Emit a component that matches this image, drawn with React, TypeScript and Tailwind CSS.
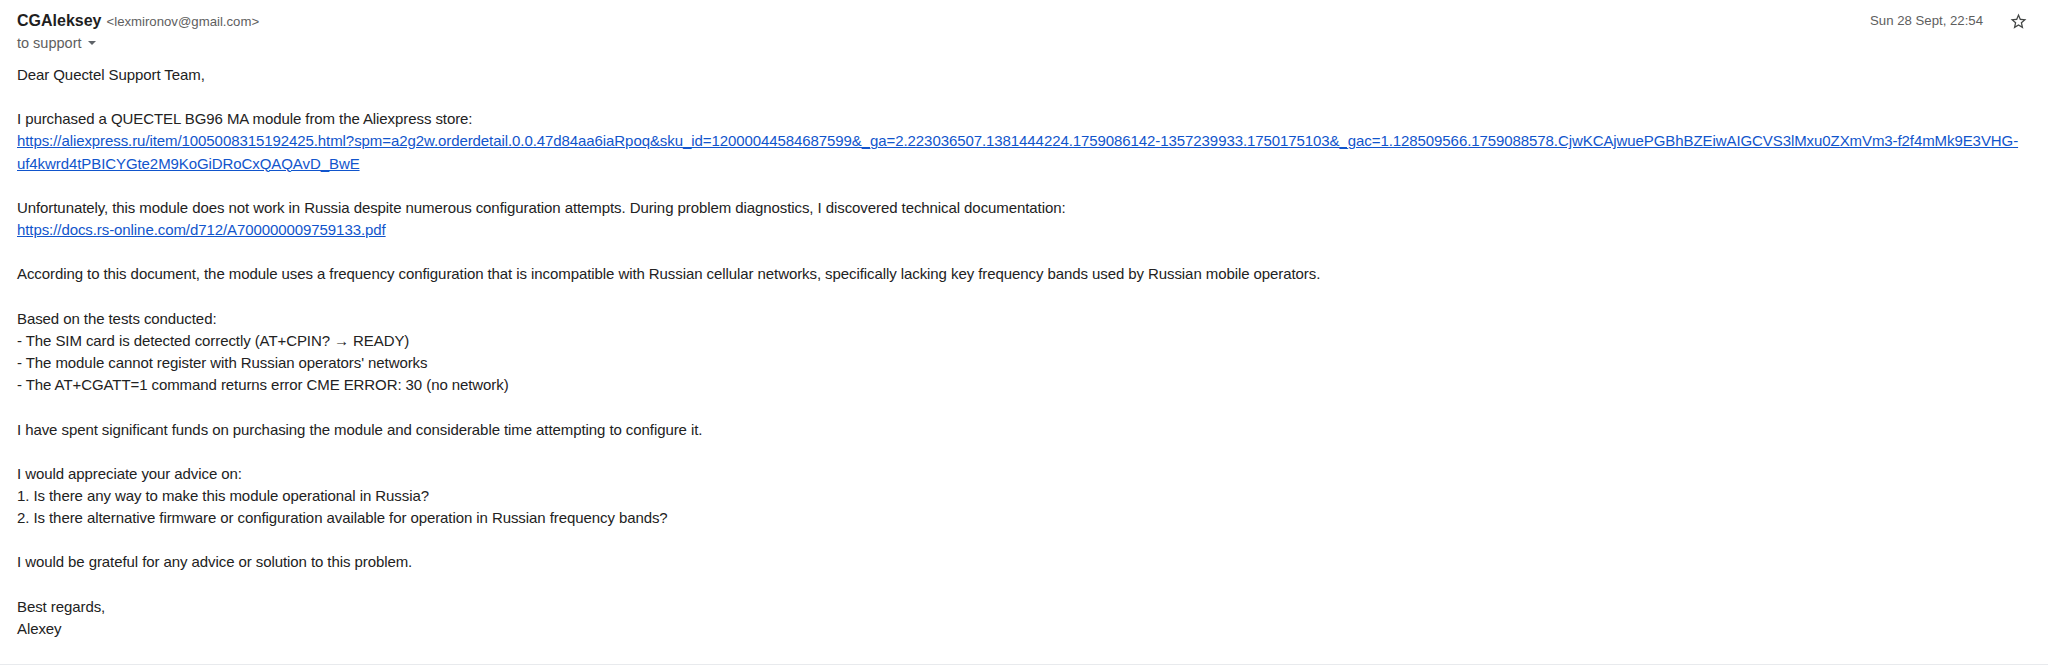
const LINK = 'text-[#1155cc] underline'

function StarIcon() {
  return (
    <svg width="19" height="19" viewBox="0 0 24 24" fill="#444746">
      <path d="M22 9.24l-7.19-.62L12 2 9.19 8.63 2 9.24l5.46 4.73L5.82 21 12 17.27 18.18 21l-1.63-7.03L22 9.24zM12 15.4l-3.76 2.27 1-4.28-3.32-2.88 4.38-.38L12 6.1l1.71 4.04 4.38.38-3.32 2.88 1 4.28L12 15.4z" />
    </svg>
  )
}

function Blank() {
  return <div className="h-[22.16px]" />
}

export default function App() {
  return (
    <div className="w-[2048px] h-[671px] bg-white font-['Liberation_Sans',Arial,sans-serif] text-[#222222]">
      <div className="border-b border-[#e8eaed] h-[665px]">
        {/* header */}
        <div className="flex justify-between pl-[17px] pr-[20px] pt-[11px]">
          <div className="flex flex-col">
            <div className="flex items-baseline leading-[20px]">
              <span className="text-[16px] font-bold text-[#1f1f1f]">CGAleksey</span>
              <span className="ml-[5px] text-[13.2px] text-[#5e5e5e]">&lt;lexmironov@gmail.com&gt;</span>
            </div>
            <div className="flex items-center mt-[2px] leading-[18px] text-[14.5px] text-[#5e5e5e]">
              <span>to support</span>
              <svg className="ml-[6px]" width="8" height="4" viewBox="0 0 8 4">
                <polygon points="0,0 8,0 4,4" fill="#5f6368" />
              </svg>
            </div>
          </div>
          <div className="flex items-start">
            <span className="leading-[20px] text-[13.2px] text-[#5e5e5e]">Sun 28 Sept, 22:54</span>
            <div className="ml-[26px] mt-[1px]">
              <StarIcon />
            </div>
          </div>
        </div>

        {/* body */}
        <div className="pl-[17px] pt-[12px] text-[15px] tracking-[-0.08px] leading-[22.16px]">
          <div>Dear Quectel Support Team,</div>
          <Blank />
          <div>I purchased a QUECTEL BG96 MA module from the Aliexpress store:</div>
          <div>
            <a className={LINK} href="#">
              https://aliexpress.ru/item/1005008315192425.html?spm=a2g2w.orderdetail.0.0.47d84aa6iaRpoq&amp;sku_id=12000044584687599&amp;_ga=2.223036507.1381444224.1759086142-1357239933.1750175103&amp;_gac=1.128509566.1759088578.CjwKCAjwuePGBhBZEiwAIGCVS3lMxu0ZXmVm3-f2f4mMk9E3VHG-
              <br />
              uf4kwrd4tPBICYGte2M9KoGiDRoCxQAQAvD_BwE
            </a>
          </div>
          <Blank />
          <div>Unfortunately, this module does not work in Russia despite numerous configuration attempts. During problem diagnostics, I discovered technical documentation:</div>
          <div>
            <a className={LINK} href="#">https://docs.rs-online.com/d712/A700000009759133.pdf</a>
          </div>
          <Blank />
          <div>According to this document, the module uses a frequency configuration that is incompatible with Russian cellular networks, specifically lacking key frequency bands used by Russian mobile operators.</div>
          <Blank />
          <div>Based on the tests conducted:</div>
          <div>- The SIM card is detected correctly (AT+CPIN? → READY)</div>
          <div>- The module cannot register with Russian operators' networks</div>
          <div>- The AT+CGATT=1 command returns error CME ERROR: 30 (no network)</div>
          <Blank />
          <div>I have spent significant funds on purchasing the module and considerable time attempting to configure it.</div>
          <Blank />
          <div>I would appreciate your advice on:</div>
          <div>1. Is there any way to make this module operational in Russia?</div>
          <div>2. Is there alternative firmware or configuration available for operation in Russian frequency bands?</div>
          <Blank />
          <div>I would be grateful for any advice or solution to this problem.</div>
          <Blank />
          <div>Best regards,</div>
          <div>Alexey</div>
        </div>
      </div>
    </div>
  )
}
